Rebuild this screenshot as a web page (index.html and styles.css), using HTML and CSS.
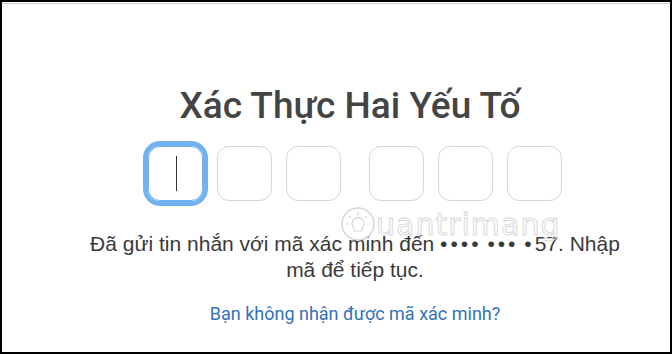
FILE: index.html
```html
<html>
    <head>
        <title>Xác Thực Hai Yếu Tố</title>
        <link rel="stylesheet" href="styles.css">
    </head>
    <body>
        <div class="frame">
            <div class="topline"></div>
            <div class="content">
                <h1>Xác Thực Hai Yếu Tố</h1>
                <div class="code">
                    <div class="digit focused"><span class="caret"></span></div>
                    <div class="digit"></div>
                    <div class="digit"></div>
                    <div class="digit split"></div>
                    <div class="digit"></div>
                    <div class="digit"></div>
                </div>
                <p class="info">Đã gửi tin nhắn với mã xác minh đến <span class="masked">••••</span> <span class="masked">•••</span> <span class="masked">•</span>57. Nhập mã để tiếp tục.</p>
                <a class="resend">Bạn không nhận được mã xác minh?</a>
            </div>
            <div class="watermark">
                <svg width="36" height="36" viewBox="0 0 36 36">
                    <circle cx="18" cy="18" r="16" fill="none" stroke="#d6d6d6" stroke-width="1.5"/>
                    <path d="M14 22 a6 6 0 1 1 8 0 v3 h-8 z" fill="none" stroke="#d6d6d6" stroke-width="1.2"/>
                    <path d="M18 6 v3 M9 10 l2 2 M27 10 l-2 2 M6 18 h3 M27 18 h3" stroke="#d6d6d6" stroke-width="1.2"/>
                </svg>
                <span>uantrimang</span>
            </div>
        </div>
    </body>
</html>
```

FILE: styles.css
```css
body {
    margin: 0;
    background: #fff;
}

.frame {
    border: 2px solid #000;
    box-sizing: border-box;
    height: 354px;
    position: relative;
    width: 672px;
}

.topline {
    border-top: 1px solid #d4d4d4;
    margin-top: 1px;
}

.content {
    align-items: center;
    display: flex;
    flex-direction: column;
    padding: 79px 0 0 38px;
}

h1 {
    color: #444;
    font-family: Roboto, sans-serif;
    font-size: 37px;
    font-weight: 500;
    line-height: 46px;
    margin: 0 0 17px 0;
    padding-right: 10px;
}

.code {
    display: flex;
    gap: 14px;
}

.digit {
    border: 1px solid #d6d6d6;
    border-radius: 12px;
    box-sizing: border-box;
    height: 55px;
    position: relative;
    width: 55px;
}

.digit.split {
    margin-left: 14px;
}

.digit.focused {
    border-color: #72b2ef;
    box-shadow: 0 0 0 5px #72b2ef;
}

.caret {
    background: #333;
    height: 35px;
    left: 27px;
    position: absolute;
    top: 9px;
    width: 1px;
}

.info {
    color: #3a3a3a;
    font-family: "Liberation Sans", sans-serif;
    font-size: 21px;
    line-height: 26px;
    margin: 30px 0 0 0;
    text-align: center;
    width: 548px;
}

.masked {
    letter-spacing: 3px;
}

.resend {
    color: #3373b6;
    font-family: Roboto, sans-serif;
    font-size: 18px;
    line-height: 24px;
    margin-top: 19px;
}

.watermark {
    align-items: center;
    display: flex;
    left: 338px;
    position: absolute;
    top: 204px;
}

.watermark span {
    -webkit-text-stroke: 1px #dadada;
    color: transparent;
    font-family: "DejaVu Sans", sans-serif;
    font-size: 30px;
    letter-spacing: 1px;
}
```
